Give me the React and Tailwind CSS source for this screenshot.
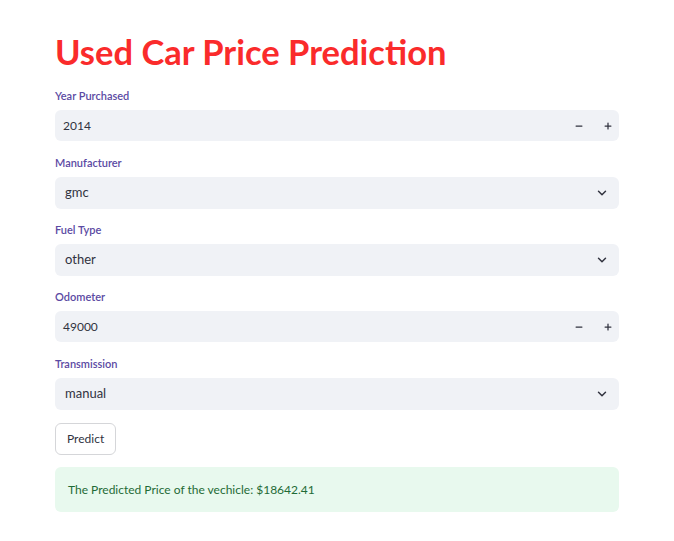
import { ChevronDown, Minus, Plus } from "lucide-react";

const font = { fontFamily: '"Source Sans Pro", Lato, "Noto Sans", sans-serif' };

function Label({ children }) {
  return (
    <p className="text-[11px] font-semibold text-[#5b4aa3] leading-[14px] mb-[7px]">
      {children}
    </p>
  );
}

function NumberField({ label, value }) {
  return (
    <div className="mb-[15px]">
      <Label>{label}</Label>
      <div className="flex items-center h-[31px] bg-[#f0f2f6] rounded-[6px] pl-[8px] pr-[6px] text-[12px] text-[#31333f]">
        <span className="flex-1">{value}</span>
        <Minus size={10} strokeWidth={3} className="mr-[19px]" />
        <Plus size={10} strokeWidth={3} />
      </div>
    </div>
  );
}

function SelectField({ label, value }) {
  return (
    <div className="mb-[14px]">
      <Label>{label}</Label>
      <div className="flex items-center h-[32px] bg-[#f0f2f6] rounded-[6px] pl-[10px] pr-[10px] text-[13px] text-[#31333f]">
        <span className="flex-1">{value}</span>
        <ChevronDown size={14} strokeWidth={2.5} />
      </div>
    </div>
  );
}

export default function App() {
  return (
    <main className="min-h-screen bg-white" style={font}>
      <div className="w-[564px] ml-[55px] pt-[30px]">
        <h1 className="text-[34.5px] font-bold text-[#fa2b2b] leading-[44px] mb-[15px]">
          Used Car Price Prediction
        </h1>

        <NumberField label="Year Purchased" value="2014" />
        <SelectField label="Manufacturer" value="gmc" />
        <SelectField label="Fuel Type" value="other" />
        <NumberField label="Odometer" value="49000" />
        <SelectField label="Transmission" value="manual" />

        <button className="block h-[32px] px-[11px] mt-[-1px] border border-[#d5d6d9] rounded-[6px] text-[12px] text-[#31333f] bg-white">
          Predict
        </button>

        <div className="mt-[12px] h-[45px] flex items-center px-[13px] bg-[#e8f9ee] rounded-[6px] text-[12px] text-[#1f6b36]">
          The Predicted Price of the vechicle: $18642.41
        </div>
      </div>
    </main>
  );
}
